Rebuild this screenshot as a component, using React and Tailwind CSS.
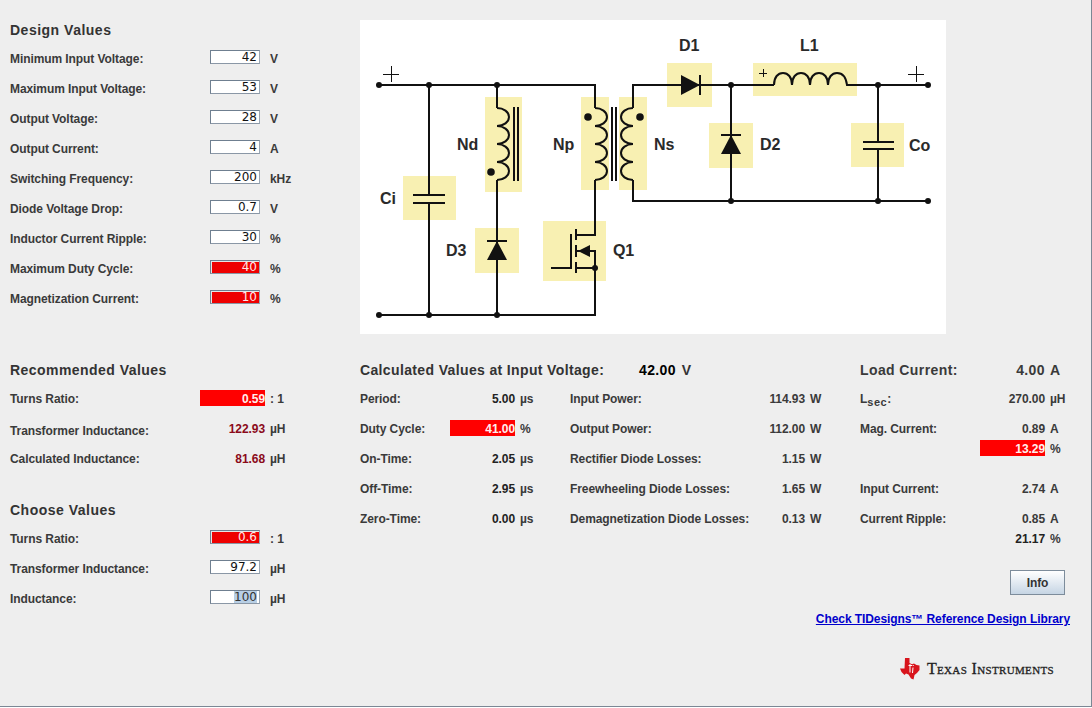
const designRows = [
  ['Minimum Input Voltage:', '42', 'V'],
  ['Maximum Input Voltage:', '53', 'V'],
  ['Output Voltage:', '28', 'V'],
  ['Output Current:', '4', 'A'],
  ['Switching Frequency:', '200', 'kHz'],
  ['Diode Voltage Drop:', '0.7', 'V'],
  ['Inductor Current Ripple:', '30', '%'],
  ['Maximum Duty Cycle:', '40', '%', true],
  ['Magnetization Current:', '10', '%', true],
];

const timeRows = [
  ['Period:', '5.00', 'µs'],
  ['Duty Cycle:', '41.00', '%', true],
  ['On-Time:', '2.05', 'µs'],
  ['Off-Time:', '2.95', 'µs'],
  ['Zero-Time:', '0.00', 'µs'],
];

const powerRows = [
  ['Input Power:', '114.93'],
  ['Output Power:', '112.00'],
  ['Rectifier Diode Losses:', '1.15'],
  ['Freewheeling Diode Losses:', '1.65'],
  ['Demagnetization Diode Losses:', '0.13'],
];

function Field({ value, error, selected }) {
  return (
    <div
      className={`mb-[4px] flex h-[14px] w-[50px] items-center justify-end border border-b-[#8a97a6] border-l-[#6f7f90] border-r-[#9aa6b3] border-t-[#6f7f90] pr-[2px] font-['DejaVu_Sans',sans-serif] text-[12px] font-normal leading-none tracking-normal ${
        error ? 'bg-[#ee0000] text-[#ffe8e8] shadow-[inset_1px_1px_0_#e6e6e6]' : 'bg-white text-[#111]'
      }`}
    >
      {selected ? <span className="bg-[#b8cfe5] text-[#333]">{value}</span> : value}
    </div>
  );
}

function InputRow({ label, value, unit, error, selected }) {
  return (
    <div className="flex h-[30px] items-center">
      <span className="w-[200px]">{label}</span>
      <Field value={value} error={error} selected={selected} />
      <span className="ml-[10px]">{unit}</span>
    </div>
  );
}

function Value({ value, error, width = 'w-[65px]', className = '' }) {
  if (error) {
    return (
      <span className="-mt-[2px] flex h-[16px] w-[65px] items-center justify-end bg-[#ff0000] pt-[2px] text-[#ffeeee]">
        {value}
      </span>
    );
  }
  return <span className={`${width} text-right ${className}`}>{value}</span>;
}

function Coil({ x, y, dir = 1 }) {
  const sweep = dir > 0 ? 1 : 0;
  let d = `M${x} ${y}`;
  for (let i = 0; i < 4; i++) {
    d += ` a12 9 0 0 ${sweep} 0 18`;
  }
  return <path d={d} fill="none" />;
}

function Dot({ x, y, r = 3 }) {
  return <circle cx={x} cy={y} r={r} fill="#111" stroke="none" />;
}

function Label({ x, y, children }) {
  return (
    <text x={x} y={y} fill="#2a2a2a" stroke="none" fontSize="16" fontWeight="700" fontFamily="'Liberation Sans', sans-serif">
      {children}
    </text>
  );
}

function Schematic() {
  const boxes = [
    [403, 176, 53, 44],
    [485, 97, 37, 95],
    [475, 228, 44, 45],
    [581, 97, 28, 93],
    [619, 97, 28, 93],
    [543, 221, 63, 60],
    [667, 63, 45, 44],
    [753, 63, 104, 33],
    [709, 123, 44, 45],
    [851, 123, 53, 44],
  ];
  const nodes = [
    [379, 85], [429, 85], [497, 85], [731, 85], [878, 85], [928, 85],
    [379, 315], [429, 315], [497, 315], [595, 268],
    [731, 201], [878, 201], [928, 201],
  ];
  return (
    <svg viewBox="360 20 586 314" className="block h-[314px] w-[586px] bg-white">
      {boxes.map(([x, y, w, h]) => (
        <rect key={`${x}-${y}`} x={x} y={y} width={w} height={h} fill="#f8f0b2" />
      ))}
      <g fill="none" stroke="#111" strokeWidth="2">
        {/* input rail, Np and switch */}
        <path d="M379 85H595V108" />
        <Coil x={595} y={108} />
        <path d="M595 180V235H576" />
        <path d="M379 315H595V251H590" />
        <path d="M576 268H595" />
        {/* Ci */}
        <path d="M429 85V195M429 203V315M413 195H445M413 203H445" />
        {/* Nd branch */}
        <path d="M497 85V108" />
        <Coil x={497} y={108} />
        <path d="M497 180V315M487 241H507M514 107V181M518 107V181" />
        {/* core and Ns */}
        <path d="M612 107V181M616 107V181" />
        <path d="M633 108V85H774" />
        <Coil x={633} y={108} dir={-1} />
        <path d="M633 180V201H928" />
        <path d="M700 75V95M731 85V201M721 135H741" />
        {/* L1 */}
        <path d="M774 85c0-8 4-12 9-12s9 4 9 12c0-8 4-12 9-12s9 4 9 12c0-8 4-12 9-12s9 4 9 12c0-8 4-12 9-12s9 4 10 12H928" />
        {/* Co */}
        <path d="M878 85V142M878 149V201M863 142H894M863 149H894" />
        {/* MOSFET */}
        <path d="M571 234V268H551M576 229V240M576 245V257M576 262V273M576 251H582" />
        {/* polarity marks */}
        <path strokeWidth="1" d="M383 74.5H399M391.5 66V82M908 74.5H924M916.5 66V82M759 73.5H767M763.5 69V77" />
      </g>
      <path d="M497 241L507 260H487Z" fill="#111" />
      <path d="M731 135L741 154H721Z" fill="#111" />
      <path d="M700 85L681 75V95Z" fill="#111" />
      <path d="M578 251L590 245V257Z" fill="#111" />
      {nodes.map(([x, y]) => (
        <Dot key={`${x}-${y}`} x={x} y={y} />
      ))}
      <Dot x={491} y={172} r={3.8} />
      <Dot x={588} y={117} r={3.8} />
      <Dot x={640} y={117} r={3.8} />
      <Label x={380} y={204}>Ci</Label>
      <Label x={457} y={150}>Nd</Label>
      <Label x={446} y={256}>D3</Label>
      <Label x={553} y={150}>Np</Label>
      <Label x={654} y={150}>Ns</Label>
      <Label x={613} y={256}>Q1</Label>
      <Label x={679} y={51}>D1</Label>
      <Label x={800} y={51}>L1</Label>
      <Label x={760} y={150}>D2</Label>
      <Label x={909} y={151}>Co</Label>
    </svg>
  );
}

function TiLogo() {
  return (
    <svg viewBox="0 0 20 22" className="h-[22px] w-[20px]">
      <path
        d="M5 0H9.5V5L12 6.2L14 5.6L16.5 7L19.5 7.4V12L17 15L14.5 17L13.5 21.5L11 20.5L8.5 16.5L6 15.5L4.5 17L1.5 14L0 10.5H4.5Z"
        fill="#d8141c"
      />
      <path d="M8.5 7.5H12M10 6V14.5M13 9.5L12.5 15M13.2 7V8" fill="none" stroke="#fff" strokeWidth="1" />
    </svg>
  );
}

export default function App() {
  return (
    <div className="h-[707px] w-[1092px] overflow-hidden border-b border-r border-[#7b8794] bg-[#eeeeee] font-['Liberation_Sans',sans-serif] text-[12px] font-bold tracking-[-0.08px] text-[#3a3a3a]">
      {/* top: inputs and schematic */}
      <div className="flex h-[340px] pt-[20px]">
        <section className="w-[360px] pl-[10px]">
          <h2 className="mb-[4px] h-[20px] text-[14px] leading-[20px] tracking-[0.5px] text-[#333]">Design Values</h2>
          {designRows.map(([label, value, unit, error]) => (
            <InputRow key={label} label={label} value={value} unit={unit} error={error} />
          ))}
        </section>
        <Schematic />
      </div>

      {/* bottom: results */}
      <div className="mt-[20px] flex">
        <section className="w-[360px] pl-[10px]">
          <h2 className="mb-[4px] h-[20px] text-[14px] leading-[20px] tracking-[0.45px] text-[#333]">Recommended Values</h2>
          <div className="flex h-[30px] items-center">
            <span className="w-[190px]">Turns Ratio:</span>
            <Value value="0.59" error />
            <span className="ml-[5px]">: 1</span>
          </div>
          <div className="flex h-[30px] items-center">
            <span className="w-[190px] pt-[4px]">Transformer Inductance:</span>
            <Value value="122.93" className="text-[#8b0a1a]" />
            <span className="ml-[5px]">µH</span>
          </div>
          <div className="flex h-[30px] items-center">
            <span className="w-[190px]">Calculated Inductance:</span>
            <Value value="81.68" className="text-[#8b0a1a]" />
            <span className="ml-[5px]">µH</span>
          </div>
          <h2 className="mb-[4px] mt-[26px] h-[20px] text-[14px] leading-[20px] tracking-[0.5px] text-[#333]">Choose Values</h2>
          <InputRow label="Turns Ratio:" value="0.6" unit=": 1" error />
          <InputRow label="Transformer Inductance:" value="97.2" unit="µH" />
          <InputRow label="Inductance:" value="100" unit="µH" selected />
        </section>

        <section className="w-[500px]">
          <div className="mb-[4px] flex h-[20px] items-center text-[14px] tracking-[0.36px]">
            <span className="w-[279px] text-[#333]">Calculated Values at Input Voltage:</span>
            <span className="text-black">42.00</span>
            <span className="ml-[6px] text-[#333]">V</span>
          </div>
          <div className="flex">
            <div className="w-[210px]">
              {timeRows.map(([label, value, unit, error]) => (
                <div key={label} className="flex h-[30px] items-center">
                  <span className="w-[90px]">{label}</span>
                  <Value value={value} error={error} className="text-[#222]" />
                  <span className="ml-[5px]">{unit}</span>
                </div>
              ))}
            </div>
            <div>
              {powerRows.map(([label, value]) => (
                <div key={label} className="flex h-[30px] items-center">
                  <span className="w-[185px] whitespace-nowrap">{label}</span>
                  <Value value={value} width="w-[50px]" />
                  <span className="ml-[5px]">W</span>
                </div>
              ))}
            </div>
          </div>
        </section>

        <section className="w-[231px]">
          <div className="mb-[4px] flex h-[20px] items-center text-[14px] tracking-[0.4px]">
            <span className="w-[120px]">Load Current:</span>
            <span className="w-[65px] text-right">4.00</span>
            <span className="ml-[5px]">A</span>
          </div>
          <div className="flex h-[30px] items-center">
            <span className="w-[120px]">
              L<sub className="text-[11px] tracking-[0.5px]">sec</sub>:
            </span>
            <Value value="270.00" />
            <span className="ml-[5px]">µH</span>
          </div>
          <div className="flex h-[26px] items-center pt-[4px]">
            <span className="w-[120px]">Mag. Current:</span>
            <Value value="0.89" />
            <span className="ml-[5px]">A</span>
          </div>
          <div className="flex h-[18px] items-center">
            <span className="w-[120px]" />
            <Value value="13.29" error />
            <span className="ml-[5px]">%</span>
          </div>
          <div className="mt-[16px] flex h-[30px] items-center">
            <span className="w-[120px]">Input Current:</span>
            <Value value="2.74" />
            <span className="ml-[5px]">A</span>
          </div>
          <div className="flex h-[30px] items-center">
            <span className="w-[120px]">Current Ripple:</span>
            <Value value="0.85" />
            <span className="ml-[5px]">A</span>
          </div>
          <div className="-mt-[5px] flex h-[20px] items-center">
            <span className="w-[120px]" />
            <Value value="21.17" className="text-[#222]" />
            <span className="ml-[5px]">%</span>
          </div>
          <div className="mr-[26px] mt-[21px] flex justify-end">
            <button className="h-[25px] w-[55px] border border-[#7d8c9b] bg-gradient-to-b from-white to-[#c6d5e4] text-[12px] font-bold text-[#333]">
              Info
            </button>
          </div>
          <div className="mr-[21px] mt-[15px] flex justify-end whitespace-nowrap">
            <a href="#" className="text-[#0000cc] underline">Check TIDesigns™ Reference Design Library</a>
          </div>
          <div className="mr-[37px] mt-[30px] flex items-center justify-end gap-[7px]">
            <TiLogo />
            <span className="font-['Liberation_Serif',serif] text-[16px] font-normal leading-none tracking-[0.35px] text-[#222] [-webkit-text-stroke:0.3px_#222] [font-variant:small-caps]">
              Texas Instruments
            </span>
          </div>
        </section>
      </div>
    </div>
  );
}
